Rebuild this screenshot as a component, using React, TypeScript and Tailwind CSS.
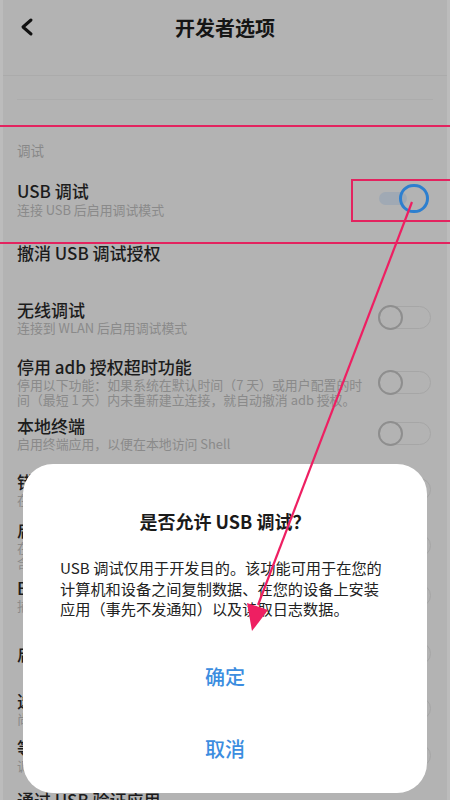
import React from "react";

const font = { fontFamily: '"Noto Sans CJK SC", "Noto Sans", sans-serif' };

function OffToggle() {
  return (
    <div className="relative w-[53px] h-[23px] rounded-full border border-[#a6a6a6] shrink-0">
      <div className="absolute left-[-1px] top-[-2px] w-[25px] h-[25px] rounded-full border-[2.5px] border-[#8e8e8e] bg-[#b3b3b3]" />
    </div>
  );
}

function Row({
  title,
  sub,
  mt,
  toggle = true,
}: {
  title: string;
  sub?: string[];
  mt: string;
  toggle?: boolean;
}) {
  return (
    <div className={`flex items-center pl-[17px] pr-[19px] ${mt}`}>
      <div className="flex-1 min-w-0">
        <div className="text-[17px] leading-[20px] font-medium text-[#1c1c1c] whitespace-nowrap">{title}</div>
        {sub &&
          sub.map((s, i) => (
            <div key={i} className="text-[12.9px] leading-[15px] text-[#8a8a8a] whitespace-nowrap">
              {s}
            </div>
          ))}
      </div>
      {toggle && <OffToggle />}
    </div>
  );
}

export default function App() {
  return (
    <div className="relative w-[450px] h-[800px] overflow-hidden bg-[#b3b3b3]" style={font}>
      <div className="absolute left-0 top-0 bottom-0 w-[3px] bg-[#bcbcbc]" />
      <div className="absolute right-0 top-0 bottom-0 w-[3px] bg-[#bcbcbc]" />

      {/* Header */}
      <div className="relative h-[55px] flex items-center justify-center">
        <svg className="absolute left-[19px] top-[17px]" width="16" height="20" viewBox="0 0 16 20">
          <path d="M12 3 L4 10 L12 17" fill="none" stroke="#111" strokeWidth="3" strokeLinecap="round" strokeLinejoin="round" />
        </svg>
        <div className="text-[20px] leading-[28px] font-bold text-[#151515]">开发者选项</div>
      </div>
      <div className="h-[20px]" />
      <div className="h-px bg-[#ababab]" />
      <div className="h-[23px]" />
      <div className="h-px bg-[#acacac] mx-[17px]" />

      {/* Section */}
      <div className="pl-[17px] pt-[42px] text-[13.5px] leading-[16px] text-[#888]">调试</div>

      {/* USB debugging */}
      <div className="flex items-center pl-[17px] pr-[19px] mt-[22px]">
        <div className="flex-1">
          <div className="text-[17px] leading-[22px] font-medium text-[#1c1c1c]">USB 调试</div>
          <div className="text-[12.9px] leading-[16px] text-[#8a8a8a]">连接 USB 后启用调试模式</div>
        </div>
        <div className="relative w-[54px] h-[30px]">
          <div className="absolute left-[2px] top-[8px] w-[28px] h-[13px] rounded-full bg-[#a0a9b4]" />
          <div className="absolute left-[22px] top-[0px] w-[30px] h-[29px] rounded-full border-[3px] border-[#2d7fcf]" />
        </div>
      </div>

      <div className="pl-[17px] mt-[24px] text-[17px] leading-[22px] font-medium text-[#1c1c1c]">撤消 USB 调试授权</div>

      <Row mt="mt-[36px]" title="无线调试" sub={["连接到 WLAN 后启用调试模式"]} />
      <Row
        mt="mt-[22px]"
        title="停用 adb 授权超时功能"
        sub={["停用以下功能：如果系统在默认时间（7 天）或用户配置的时", "间（最短 1 天）内未重新建立连接，就自动撤消 adb 授权。"]}
      />
      <Row mt="mt-[9px]" title="本地终端" sub={["启用终端应用，以便在本地访问 Shell"]} />
      <Row mt="mt-[21px]" title="错误报告快捷方式" sub={["在电源菜单中显示用于提交错误报告的按钮"]} />
      <Row mt="mt-[13px]" title="启用详细的供应商日志记录" sub={["在错误报告中包含额外的设备专用供应商日志，其中可能", "含有隐私信息、使用更多电量和/或使用更多存储空间。"]} />
      <Row mt="mt-[8px]" title="Bluetooth HCI 信息收集日志" sub={["捕获所有蓝牙 HCI 数据包"]} />
      <Row mt="mt-[29px]" title="启用视图属性检查功能" />
      <Row mt="mt-[26px]" title="选择模拟位置信息应用" sub={["尚未设置模拟位置信息应用"]} />
      <Row mt="mt-[12px]" title="等待调试器" sub={["调试应用会在执行前等待附加调试器"]} />
      <div className="pl-[17px] mt-[17px] text-[17px] leading-[20px] font-medium text-[#1c1c1c] whitespace-nowrap">通过 USB 验证应用</div>

      {/* Dialog */}
      <div className="absolute left-[23px] top-[464px] w-[404px] h-[329px] rounded-[30px] bg-white flex flex-col items-center">
        <div className="mt-[45px] text-[18px] leading-[24px] font-bold text-[#1a1a1a]">是否允许 USB 调试？</div>
        <div className="mt-[24px] self-start pl-[37px] text-[15.2px] leading-[20.5px] text-[#222]">
          <div className="whitespace-nowrap">USB 调试仅用于开发目的。该功能可用于在您的</div>
          <div className="whitespace-nowrap">计算机和设备之间复制数据、在您的设备上安装</div>
          <div className="whitespace-nowrap">应用（事先不发通知）以及读取日志数据。</div>
        </div>
        <div className="mt-[44px] text-[20px] leading-[28px] font-medium text-[#3b8de0]">确定</div>
        <div className="mt-[44px] text-[20px] leading-[28px] font-medium text-[#3b8de0]">取消</div>
      </div>

      {/* Annotations */}
      <div className="absolute left-[-3px] right-[-3px] top-[125px] h-[119px] border-2 border-[#e3235f]" />
      <div className="absolute left-[351px] right-[-3px] top-[179px] h-[43px] border-2 border-[#e3235f]" />
      <svg className="absolute left-0 top-0" width="450" height="800" viewBox="0 0 450 800">
        <line x1="412" y1="202" x2="258" y2="605" stroke="#ee1f62" strokeWidth="2.2" />
        <polygon points="252,631 247,603 268,610" fill="#ee1f62" />
      </svg>
    </div>
  );
}
